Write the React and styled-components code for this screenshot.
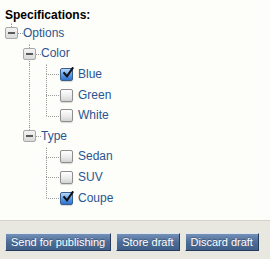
import React from "react"
import styled, { createGlobalStyle } from "styled-components"

const GlobalStyle = createGlobalStyle`
  html, body {
    margin: 0;
    padding: 0;
    background: #fdfdf9;
  }
  body {
    font-family: "Liberation Sans", Arial, Helvetica, sans-serif;
  }
`

const Page = styled.div`
  display: flex;
  flex-direction: column;
  height: 100vh;
  background: #fdfdf9;
`

const Content = styled.div`
  flex: 1;
  padding: 8px 0 0 5px;
`

const Heading = styled.div`
  font-size: 12px;
  font-weight: bold;
  line-height: 15px;
  color: #000;
`

const Tree = styled.div`
  display: flex;
  flex-direction: column;
`

const Row = styled.div`
  display: flex;
  align-items: stretch;
  height: 20.6px;
`

const Cell = styled.div`
  display: grid;
  grid-template: 1fr / 1fr;
  width: 18px;
  flex: none;
`

const Lines = styled.div`
  grid-area: 1 / 1;
  display: flex;
  flex-direction: column;
  margin-left: ${p => p.$offset}px;
`

const Half = styled.div`
  flex: 1;
  border-left: 1px dotted ${p => (p.$on ? "#9c9c9c" : "transparent")};
  border-top: 1px dotted ${p => (p.$branch ? "#9c9c9c" : "transparent")};
  box-sizing: border-box;
`

const ToggleBox = styled.div`
  grid-area: 1 / 1;
  align-self: center;
  justify-self: start;
  width: 13px;
  height: 12px;
  box-sizing: border-box;
  border: 1px solid #a9a9a9;
  border-radius: 2px;
  background: linear-gradient(#f4f4f4, #d9d9d9);
  display: flex;
  align-items: center;
  justify-content: center;
  &::after {
    content: "";
    width: 7px;
    height: 2px;
    background: #5a5a5a;
  }
`

const Check = styled.span`
  align-self: center;
  flex: none;
  width: 13px;
  height: 13px;
  margin-left: 1px;
  box-sizing: border-box;
  border-radius: 2px;
  border: 1px solid ${p => (p.$checked ? "#3a5d8f" : "#8e8e8e")};
  background: ${p =>
    p.$checked
      ? "linear-gradient(#b9d8fa, #5b9ae6 55%, #2f72d0)"
      : "linear-gradient(#ffffff, #e9e9e9 60%, #d3d3d3)"};
  box-shadow: 0 1px 1px rgba(0, 0, 0, 0.15);
  display: flex;
  align-items: center;
  justify-content: center;
  overflow: visible;
`

const Label = styled.span`
  align-self: center;
  font-size: 12px;
  line-height: 15px;
  color: #2a5592;
  margin-left: ${p => p.$gap || 0}px;
  white-space: nowrap;
`

const Footer = styled.div`
  flex: none;
  display: flex;
  gap: 5px;
  padding: 12px 5px 8px;
  background: #e8e8e1;
  border-top: 1px solid #d3d3cb;
`

const Button = styled.button`
  height: 18px;
  padding: 0 5px;
  font-family: "Liberation Sans", Arial, Helvetica, sans-serif;
  font-size: 11px;
  line-height: 16px;
  color: #fff;
  text-shadow: 0 -1px 0 rgba(0, 0, 0, 0.25);
  background: linear-gradient(#7391b8, #4d6d97 50%, #3f5f89);
  border: 1px solid;
  border-color: #dfe6ef #263b5b #263b5b #dfe6ef;
  border-radius: 0;
  cursor: pointer;
`

const CheckMark = () => (
  <svg width="12" height="12" viewBox="0 0 12 12" style={{ marginTop: -2, marginRight: -2 }}>
    <path d="M2.2 6.2 L5 9.4 L10.6 1.2" fill="none" stroke="#111" strokeWidth="2.1" strokeLinecap="square" />
  </svg>
)

const Blank = () => <Cell />

const Pipe = () => (
  <Cell>
    <Lines $offset={6}>
      <Half $on />
      <Half $on />
    </Lines>
  </Cell>
)

const Toggle = ({ down }) => (
  <Cell>
    <Lines $offset={6}>
      <Half $on />
      <Half $on={down} $branch />
    </Lines>
    <ToggleBox />
  </Cell>
)

const Branch = ({ last }) => (
  <Cell>
    <Lines $offset={5}>
      <Half $on />
      <Half $on={!last} $branch />
    </Lines>
  </Cell>
)

const groups = [
  { name: "Color", items: [["Blue", true], ["Green", false], ["White", false]] },
  { name: "Type", items: [["Sedan", false], ["SUV", false], ["Coupe", true]] }
]

const App = () => {
  return (
    <Page>
      <GlobalStyle />
      <Content>
        <Heading>Specifications:</Heading>
        <Tree>
          <Row>
            <Toggle down={false} />
            <Label>Options</Label>
          </Row>
          {groups.map((group, gi) => {
            const lastGroup = gi === groups.length - 1
            return (
              <React.Fragment key={group.name}>
                <Row>
                  <Blank />
                  <Toggle down={!lastGroup} />
                  <Label>{group.name}</Label>
                </Row>
                {group.items.map(([item, checked], i) => (
                  <Row key={item}>
                    <Blank />
                    {lastGroup ? <Blank /> : <Pipe />}
                    <Branch last={i === group.items.length - 1} />
                    <Check $checked={checked}>{checked && <CheckMark />}</Check>
                    <Label $gap={5}>{item}</Label>
                  </Row>
                ))}
              </React.Fragment>
            )
          })}
        </Tree>
      </Content>
      <Footer>
        <Button>Send for publishing</Button>
        <Button>Store draft</Button>
        <Button>Discard draft</Button>
      </Footer>
    </Page>
  )
}

export default App
